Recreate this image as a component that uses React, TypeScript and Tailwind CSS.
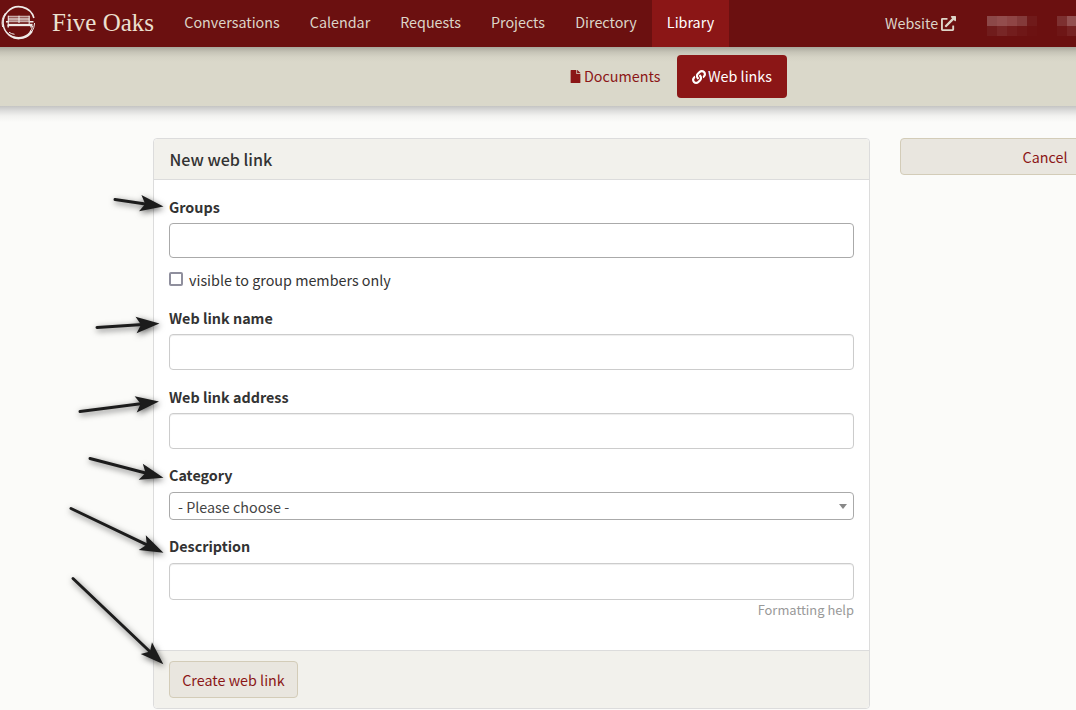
import React from "react";
import { FaExternalLinkAlt, FaFile, FaLink } from "react-icons/fa";

const navItems = [
  { label: "Conversations", width: "w-[126px]" },
  { label: "Calendar", width: "w-[90px]" },
  { label: "Requests", width: "w-[91px]" },
  { label: "Projects", width: "w-[84px]" },
  { label: "Directory", width: "w-[92px]" },
];

function Logo() {
  return (
    <svg width="36" height="36" viewBox="0 0 36 36" fill="none" stroke="#f0ebe8" className="shrink-0">
      <path d="M32.9 13A15.5 15.5 0 0 0 6.5 6.8A15.5 15.5 0 0 0 8.2 30A15.5 15.5 0 0 0 27 30.3" strokeWidth="1.6" />
      <path d="M12 32A15.5 15.5 0 0 0 30.8 26" strokeWidth="2.4" />
      <path d="M1.6 22A16.2 16.2 0 0 1 4.5 8M33.6 18Q33.3 23 31 26.5M31.6 21Q31 24.5 29 26.5M8 27.2Q10.5 29 13.5 29.3" strokeWidth="1" />
      <path d="M7 11.6H28.5M7 14H28.5M7 16.3H28.5" strokeWidth="1.9" strokeOpacity="0.7" />
      <path d="M7.3 10.8V19M18 10.8V18M28.2 10.8V19" strokeWidth="1.2" strokeOpacity="0.85" />
      <path d="M6.5 20H31.5" strokeWidth="2.3" />
      <path d="M7.2 20V22.5M30 20V22.5M5 16.8H7.5M28.5 16.8H32.5" strokeWidth="1.4" />
    </svg>
  );
}

function Mosaic({ rows }: { rows: string[][] }) {
  return (
    <div className="flex shrink-0 flex-col">
      {rows.map((row, r) => (
        <div key={r} className="flex">
          {row.map((c, i) => (
            <div key={i} className={"h-[10px] w-[10px] " + c} />
          ))}
        </div>
      ))}
    </div>
  );
}

function Arrow({ x1, y1, x2, y2 }: { x1: number; y1: number; x2: number; y2: number }) {
  const len = Math.hypot(x2 - x1, y2 - y1);
  const angle = (Math.atan2(y2 - y1, x2 - x1) * 180) / Math.PI;
  return (
    <g transform={`translate(${x2} ${y2}) rotate(${angle})`}>
      <path d={`M${-len} 0H-16`} stroke="#1c1c1c" strokeWidth="3" strokeLinecap="round" />
      <path d="M0.5 0L-23 8.2L-18 0L-23 -8.2Z" fill="#1c1c1c" />
    </g>
  );
}

function Label({ children }: { children: React.ReactNode }) {
  return <label className="block h-[26px] text-[14.35px] leading-[20px] font-bold">{children}</label>;
}

export default function App() {
  return (
    <div className="relative h-[710px] w-[1076px] overflow-hidden bg-[#fbfbf9] font-['Noto_Sans_CJK_SC',sans-serif] text-[14.33px] text-[#333]">
      <header className="flex h-[47px] items-center bg-[#6b1010] text-[#ddd5c8]">
        <div className="flex w-[169px] shrink-0 items-center pb-[2px] pl-px">
          <Logo />
          <span className="ml-[15px] pt-px font-['Liberation_Serif',serif] text-[25px] leading-8 whitespace-nowrap text-[#ece0d0]">Five Oaks</span>
        </div>
        <nav className="flex h-full shrink-0 leading-[43px]">
          {navItems.map((n) => (
            <a key={n.label} className={"text-center whitespace-nowrap " + n.width}>{n.label}</a>
          ))}
          <a className="w-[77px] bg-[#8b1616] text-center text-white">Library</a>
        </nav>
        <a className="ml-[156px] flex h-full shrink-0 items-center gap-[3px] pb-[3px] leading-[43px]">
          Website <FaExternalLinkAlt size={15} className="mt-[2px]" />
        </a>
        <div className="ml-[31px] flex shrink-0 gap-5 pt-[5px]">
          <Mosaic
            rows={[
              ["bg-[#8c4848]", "bg-[#934d4d]", "bg-[#8f4545]", "bg-[#843a3a]", "bg-[#701a1a]"],
              ["bg-[#701c1c]", "bg-[#782626]", "bg-[#731d1d]", "bg-[#6f1717]", "bg-[#6c1212]"],
            ]}
          />
          <Mosaic rows={[["bg-[#7d3030]", "bg-[#935050]"], ["bg-[#6e1616]", "bg-[#762222]"]]} />
        </div>
      </header>

      <div className="flex h-[59px] bg-[#dad8ca] bg-[linear-gradient(#a9a79c,#c6c4b7_5px,#d5d3c5_10px,#dad8ca_15px)] pt-2 pl-[563px]">
        <div className="flex items-start leading-[41px] whitespace-nowrap">
          <a className="flex h-[43px] w-[114px] items-center gap-[3px] pb-[2px] pl-[6px] text-[#8b1616]">
            <FaFile size={13} className="mt-[2px] -mr-px" />
            Documents
          </a>
          <a className="flex h-[43px] w-[110px] items-center justify-center gap-[2px] rounded bg-[#8b1616] pb-[2px] text-white">
            <FaLink size={14} className="mt-[2px]" />
            Web links
          </a>
        </div>
      </div>

      <main className="flex h-[604px] items-start gap-[30px] bg-[linear-gradient(#c4c4c3,#dededd_5px,#f2f2f0_10px,#fbfbf9_16px)] pt-8 pl-[153px]">
        <section className="w-[717px] shrink-0 rounded border border-[#dcdcdc] bg-white">
          <h1 className="h-[41px] rounded-t border-b border-[#dcdcdc] bg-[#f2f1ec] pl-[15.5px] text-[16.1px] leading-[41px] font-medium">New web link</h1>
          <div className="h-[470px] px-[15px] pt-[17px]">
            <Label>Groups</Label>
            <div className="h-[35px] rounded border border-[#aaa]" />
            <div className="mt-[11px] flex h-[22px] items-center">
              <span className="mb-[3px] h-[14px] w-[14px] rounded-[2px] border-2 border-[#8f8f9d]" />
              <span className="ml-[6px] leading-[22px]">visible to group members only</span>
            </div>
            <div className="mt-[17px]">
              <Label>Web link name</Label>
              <div className="h-9 rounded border border-[#ccc] shadow-[inset_0_1px_1px_rgba(0,0,0,0.075)]" />
            </div>
            <div className="mt-[17px]">
              <Label>Web link address</Label>
              <div className="h-9 rounded border border-[#ccc] shadow-[inset_0_1px_1px_rgba(0,0,0,0.075)]" />
            </div>
            <div className="mt-4 pb-px">
              <Label>Category</Label>
              <div className="mt-px flex h-7 items-center justify-between rounded border border-[#aaa] pr-[6px] pl-2 text-[#444]">
                <span className="pt-px leading-[26px]">- Please choose -</span>
                <svg width="8" height="5" viewBox="0 0 8 5"><path d="M0 0H8L4 5Z" fill="#888" /></svg>
              </div>
            </div>
            <div className="mt-[15px]">
              <Label>Description</Label>
              <div className="mt-px h-[37px] rounded border border-[#ccc] shadow-[inset_0_1px_1px_rgba(0,0,0,0.075)]" />
            </div>
            <div className="text-right text-[12.9px] leading-[20px] text-[#999]">Formatting help</div>
          </div>
          <div className="h-[58px] rounded-b border-t border-[#dcdcdc] bg-[#f2f1ec] pt-[10px] pl-[15px]">
            <button className="h-[37px] w-[129px] rounded border border-[#d3ccb8] bg-[#e9e6df] leading-[36px] text-[#8b1616]">Create web link</button>
          </div>
        </section>
        <button className="h-[37px] w-[290px] shrink-0 rounded border border-[#d3ccb8] bg-[#e9e6df] leading-[36px] text-[#8b1616]">Cancel</button>
      </main>

      <svg className="pointer-events-none absolute inset-0 z-30 drop-shadow-[1px_2px_3px_rgba(0,0,0,0.6)]" width="1076" height="710">
        <Arrow x1={115} y1={199.5} x2={163} y2={206.5} />
        <Arrow x1={97} y1={327.5} x2={159} y2={323.5} />
        <Arrow x1={80} y1={411.5} x2={158.5} y2={401.5} />
        <Arrow x1={90} y1={458.5} x2={163} y2={477.5} />
        <Arrow x1={71} y1={508.5} x2={163} y2={552.5} />
        <Arrow x1={73} y1={578.5} x2={163} y2={664} />
      </svg>
    </div>
  );
}
